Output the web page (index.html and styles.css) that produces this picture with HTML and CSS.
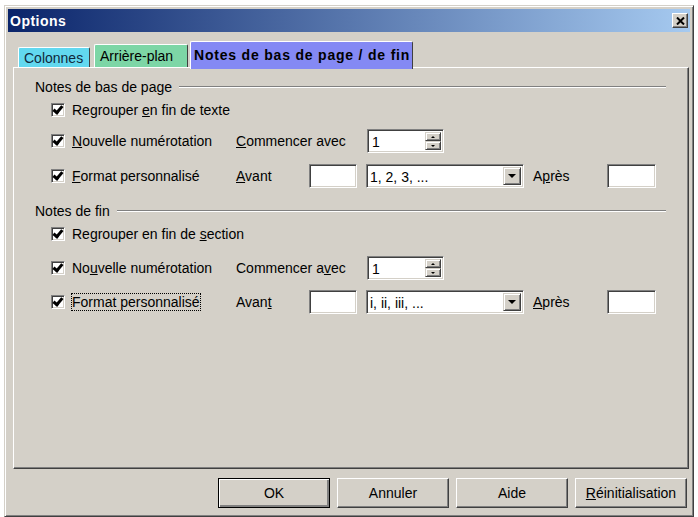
FILE: index.html
```html
<!DOCTYPE html>
<html lang="fr">
<head>
  <meta charset="UTF-8">
  <title>Options</title>
  <link rel="stylesheet" href="styles.css">
</head>
<body>

<div class="window">

  <!-- Title bar -->
  <div class="titlebar">
    <span class="title">Options</span>
    <span class="close">
      <svg width="9" height="8" viewBox="0 0 9 8"><path d="M1 0.5 L8 7.5 M8 0.5 L1 7.5" stroke="#000" stroke-width="2"/></svg>
    </span>
  </div>

  <!-- Tabs -->
  <div class="tabs">
    <div class="tab tab-cols">Colonnes</div>
    <div class="tab tab-bg">Arrière-plan</div>
    <div class="tab tab-active">Notes de bas de page / de fin</div>
  </div>

  <div class="panel">

    <!-- Footnotes -->
    <div class="group-head"><span>Notes de bas de page</span><span class="rule"></span></div>
    <div class="row h30">
      <div class="check-col"><span class="check"></span><span>Regrouper <u>e</u>n fin de texte</span></div>
    </div>
    <div class="row h32">
      <div class="check-col"><span class="check"></span><span><u>N</u>ouvelle numérotation</span></div>
      <span class="label w-start"><u>C</u>ommencer avec</span>
      <div class="spin sunken">
        <span class="spin-value">1</span>
        <div class="spin-btns">
          <span class="spin-btn raised"><i class="tri-up"></i></span>
          <span class="spin-btn raised"><i class="tri-down"></i></span>
        </div>
      </div>
    </div>
    <div class="row h38">
      <div class="check-col"><span class="check"></span><span><u>F</u>ormat personnalisé</span></div>
      <span class="label w-avant"><u>A</u>vant</span>
      <span class="edit sunken"></span>
      <div class="combo sunken">
        <span class="combo-value">1, 2, 3, ...</span>
        <span class="combo-btn raised"><i class="arrow"></i></span>
      </div>
      <span class="label w-apres">A<u>p</u>rès</span>
      <span class="edit edit-after sunken"></span>
    </div>

    <!-- Endnotes -->
    <div class="group-head second"><span>Notes de fin</span><span class="rule"></span></div>
    <div class="row h30">
      <div class="check-col"><span class="check"></span><span>Regrouper en fin de <u>s</u>ection</span></div>
    </div>
    <div class="row h38">
      <div class="check-col"><span class="check"></span><span>No<u>u</u>velle numérotation</span></div>
      <span class="label w-start">Commencer a<u>v</u>ec</span>
      <div class="spin sunken">
        <span class="spin-value">1</span>
        <div class="spin-btns">
          <span class="spin-btn raised"><i class="tri-up"></i></span>
          <span class="spin-btn raised"><i class="tri-down"></i></span>
        </div>
      </div>
    </div>
    <div class="row h30">
      <div class="check-col"><span class="check"></span><span class="focus">Format personnalisé</span></div>
      <span class="label w-avant">Avan<u>t</u></span>
      <span class="edit sunken"></span>
      <div class="combo sunken">
        <span class="combo-value">i, ii, iii, ...</span>
        <span class="combo-btn raised"><i class="arrow"></i></span>
      </div>
      <span class="label w-apres"><u>A</u>près</span>
      <span class="edit edit-after sunken"></span>
    </div>

  </div>

  <!-- Dialog buttons -->
  <div class="buttons">
    <button class="button default">OK</button>
    <button class="button">Annuler</button>
    <button class="button">Aide</button>
    <button class="button"><u>R</u>éinitialisation</button>
  </div>

</div>

</body>
</html>
```

FILE: styles.css
```css
body {
  margin: 0;
  background: #fff;
  font-family: "Liberation Sans", Arial, sans-serif;
  font-size: 14px;
  color: #000;
}

.window {
  margin: 5px 0 0 4px;
  width: 690px;
  height: 512px;
  box-sizing: border-box;
  padding: 3px;
  background: #d4d0c8;
  border: 1px solid;
  border-color: #d4d0c8 #404040 #404040 #d4d0c8;
  box-shadow: inset 1px 1px #fff, inset -1px -1px #808080;
}

.titlebar {
  height: 23px;
  display: flex;
  align-items: center;
  justify-content: space-between;
  padding: 0 2px;
  background: linear-gradient(to right, #0a246a, #a6caf0);
}

.title {
  color: #fff;
  font-weight: bold;
  font-size: 14px;
  letter-spacing: 0.5px;
}

.close {
  width: 16px;
  height: 15px;
  box-sizing: border-box;
  display: flex;
  align-items: center;
  justify-content: center;
  background: #d4d0c8;
  border: 1px solid;
  border-color: #fff #404040 #404040 #fff;
  box-shadow: inset -1px -1px #808080;
}

/* tabs */
.tabs {
  display: flex;
  align-items: flex-end;
  height: 26px;
  margin: 9px 0 0 10px;
  position: relative;
  z-index: 1;
}

.tab {
  box-sizing: border-box;
  height: 20px;
  padding: 0 5px;
  display: flex;
  align-items: center;
  white-space: nowrap;
  border: 1px solid;
  border-bottom: none;
  border-color: #fff #404040 #404040 #fff;
  border-radius: 2px 2px 0 0;
}

.tab-cols {
  width: 72px;
  background: #62d8ef;
  color: #10283c;
}

.tab-bg {
  width: 94px;
  margin-left: 4px;
  background: #7dd6a6;
  height: 23px;
}

.tab-active {
  width: 223px;
  margin-left: 2px;
  height: 28px;
  margin-bottom: -2px;
  padding-left: 3px;
  padding-bottom: 2px;
  background: #8489f4;
  font-weight: bold;
  letter-spacing: 0.8px;
}

/* panel */
.panel {
  height: 402px;
  box-sizing: border-box;
  margin: 0 1px 0 5px;
  padding: 11px 22px 0 21px;
  border: 1px solid;
  border-color: #fff #404040 #404040 #fff;
  box-shadow: inset -1px -1px #808080;
}

.group-head {
  height: 16px;
  display: flex;
  align-items: center;
}

.group-head.second {
  margin-top: 8px;
}

.rule {
  flex: 1;
  margin-left: 7px;
  border-top: 1px solid #808080;
  border-bottom: 1px solid #fff;
}

.row {
  display: flex;
  align-items: center;
  padding-left: 16px;
  white-space: nowrap;
}

.h30 { height: 30px; }
.h32 { height: 32px; }
.h38 { height: 38px; }

.check-col {
  width: 185px;
  display: flex;
  align-items: center;
}

.check {
  flex: none;
  width: 14px;
  height: 14px;
  box-sizing: border-box;
  margin-right: 7px;
  background: #fff;
  border: 1px solid;
  border-color: #808080 #fff #fff #808080;
  box-shadow: inset 1px 1px #404040, inset -1px -1px #d4d0c8;
  position: relative;
}

.check::after {
  content: "";
  position: absolute;
  left: 3px;
  top: 0;
  width: 3px;
  height: 7px;
  border: solid #000;
  border-width: 0 3px 3px 0;
  transform: rotate(40deg);
}

.focus {
  outline: 1px dotted #000;
  outline-offset: 0;
}

.label.w-start { width: 131px; }
.label.w-avant { width: 73px; }
.label.w-apres { width: 74px; margin-left: 9px; }

.sunken {
  box-sizing: border-box;
  background: #fff;
  border: 1px solid;
  border-color: #808080 #fff #fff #808080;
  box-shadow: inset 1px 1px #404040, inset -1px -1px #d4d0c8;
}

.raised {
  box-sizing: border-box;
  background: #d4d0c8;
  border: 1px solid;
  border-color: #d4d0c8 #404040 #404040 #d4d0c8;
  box-shadow: inset 1px 1px #fff, inset -1px -1px #808080;
}

.edit {
  width: 48px;
  height: 24px;
}

.edit.edit-after {
  width: 49px;
}

.spin {
  width: 77px;
  height: 24px;
  display: flex;
  padding: 2px;
}

.spin-value {
  flex: 1;
  padding-left: 2px;
  line-height: 20px;
}

.spin-btns {
  display: flex;
  flex-direction: column;
  width: 16px;
}

.spin-btn {
  height: 10px;
  display: flex;
  align-items: center;
  justify-content: center;
}

.tri-up,
.tri-down {
  width: 0;
  height: 0;
  border-left: 2px solid transparent;
  border-right: 2px solid transparent;
}

.tri-up { border-bottom: 2px solid #000; }
.tri-down { border-top: 2px solid #000; }

.combo {
  width: 158px;
  height: 24px;
  margin-left: 9px;
  display: flex;
  padding: 2px;
}

.combo-value {
  flex: 1;
  padding-left: 1px;
  line-height: 20px;
}

.combo-btn {
  width: 18px;
  display: flex;
  align-items: center;
  justify-content: center;
}

.arrow {
  width: 0;
  height: 0;
  border-left: 4px solid transparent;
  border-right: 4px solid transparent;
  border-top: 4px solid #000;
}

/* dialog buttons */
.buttons {
  display: flex;
  justify-content: flex-end;
  gap: 7px;
  margin-top: 9px;
  padding-right: 3px;
}

.button {
  width: 112px;
  height: 30px;
  box-sizing: border-box;
  font-family: inherit;
  font-size: 14px;
  color: #000;
  background: #d4d0c8;
  border: 1px solid;
  border-color: #fff #404040 #404040 #fff;
  box-shadow: inset -1px -1px #808080;
  padding: 0;
}

.button.default {
  border-color: #000;
  box-shadow: inset 1px 1px #fff, inset -2px -2px #808080;
}
```
